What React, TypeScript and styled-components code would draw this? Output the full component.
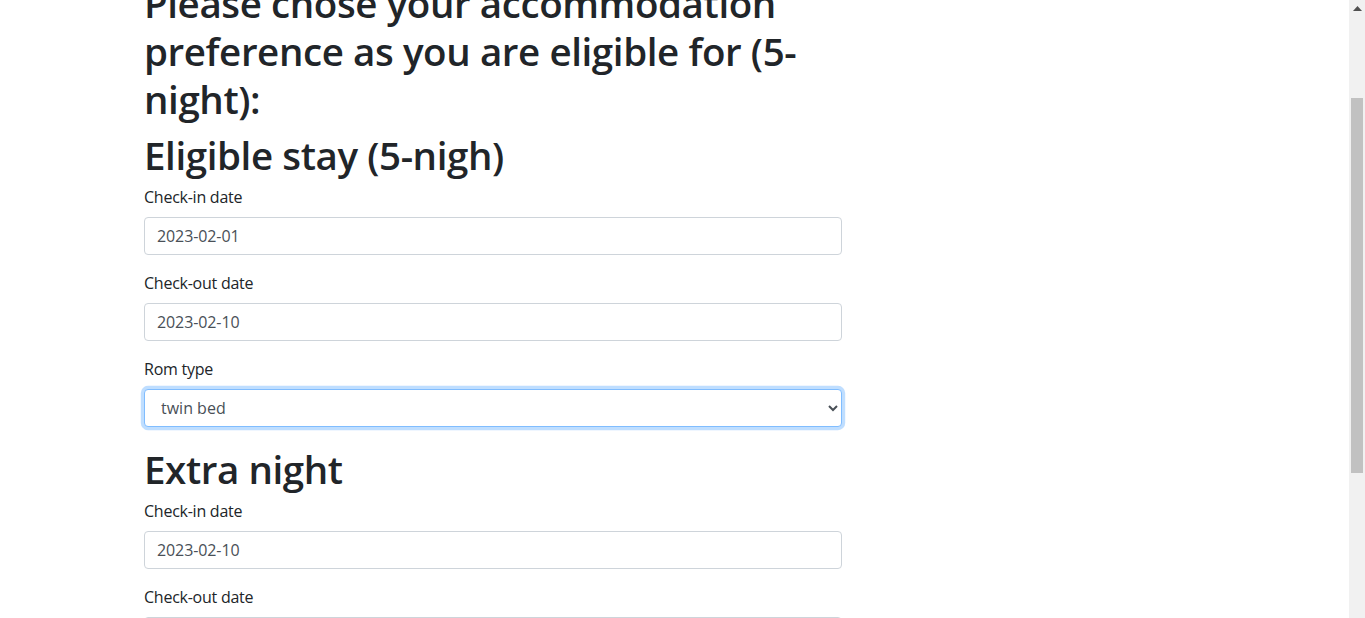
import React from "react";
import styled, { createGlobalStyle } from "styled-components";

const GlobalStyle = createGlobalStyle`
  html, body {
    margin: 0;
    padding: 0;
    overflow: hidden;
    background: #ffffff;
  }
  body {
    font-family: "Open Sans", "Noto Sans", "Liberation Sans", sans-serif;
    color: #212529;
    font-size: 16px;
    line-height: 1.5;
  }
`;

const Viewport = styled.div`
  display: flex;
  width: 1365px;
  height: 618px;
  overflow: hidden;
`;

const Main = styled.main`
  flex: 1;
  height: 618px;
  overflow: hidden;
`;

const Content = styled.div<{ $scroll: number }>`
  width: 698px;
  margin-left: 144px;
  margin-top: ${(p) => -p.$scroll}px;
`;

const Title = styled.h1`
  margin: 0 0 6px;
  padding-top: 2px;
  font-size: 38.5px;
  font-weight: 600;
  letter-spacing: -0.4px;
  line-height: 48px;
  color: #212529;
`;

const Group = styled.div`
  margin-bottom: 16px;
`;

const Label = styled.label`
  display: block;
  margin-bottom: 8px;
  font-size: 16px;
  line-height: 24px;
  letter-spacing: -0.25px;
  color: #212529;
`;

const Field = styled.input`
  display: block;
  box-sizing: border-box;
  width: 100%;
  height: 38px;
  padding: 6px 12px;
  font-family: inherit;
  font-size: 16px;
  line-height: 1.5;
  letter-spacing: -0.1px;
  color: #495057;
  background: #fff;
  border: 1px solid #ced4da;
  border-radius: 4px;
  outline: none;
`;

const Select = styled.select<{ $focused?: boolean }>`
  display: block;
  box-sizing: border-box;
  width: 100%;
  height: 38px;
  padding: 6px 12px;
  font-family: inherit;
  font-size: 16px;
  line-height: 1.5;
  color: #495057;
  background: #fff;
  border: 1px solid ${(p) => (p.$focused ? "#80bdff" : "#ced4da")};
  border-radius: 4px;
  outline: none;
  box-shadow: ${(p) => (p.$focused ? "0 0 0 3.2px rgba(0, 123, 255, 0.25)" : "none")};
`;

const ScrollTrack = styled.div`
  width: 16px;
  height: 618px;
  background: #f1f1f1;
  display: flex;
  flex-direction: column;
  align-items: center;
`;

const ScrollArrow = styled.div`
  width: 16px;
  height: 17px;
  display: flex;
  align-items: center;
  justify-content: center;
`;

const ScrollThumb = styled.div<{ $offset: number; $size: number }>`
  width: 12px;
  margin-top: ${(p) => p.$offset}px;
  height: ${(p) => p.$size}px;
  background: #c1c1c1;
`;

type FieldDef = { label: string; value: string };

const InputGroup: React.FC<FieldDef> = ({ label, value }) => (
  <Group>
    <Label>{label}</Label>
    <Field type="text" readOnly defaultValue={value} />
  </Group>
);

export default function App() {
  return (
    <>
      <GlobalStyle />
      <Viewport>
        <Main>
          <Content $scroll={23}>
            <Title>
              Please chose your accommodation preference as you are eligible for (5-night):
            </Title>
            <Title>Eligible stay (5-nigh)</Title>
            <InputGroup label="Check-in date" value="2023-02-01" />
            <InputGroup label="Check-out date" value="2023-02-10" />
            <Group>
              <Label>Rom type</Label>
              <Select $focused defaultValue="twin">
                <option value="twin">twin bed</option>
                <option value="double">double bed</option>
              </Select>
            </Group>
            <Title>Extra night</Title>
            <InputGroup label="Check-in date" value="2023-02-10" />
            <InputGroup label="Check-out date" value="2023-02-11" />
          </Content>
        </Main>
        <ScrollTrack>
          <ScrollArrow>
            <svg width="9" height="5" viewBox="0 0 9 5">
              <path d="M0 5 L4.5 0 L9 5 Z" fill="#505050" />
            </svg>
          </ScrollArrow>
          <ScrollThumb $offset={81} $size={375} />
        </ScrollTrack>
      </Viewport>
    </>
  );
}
